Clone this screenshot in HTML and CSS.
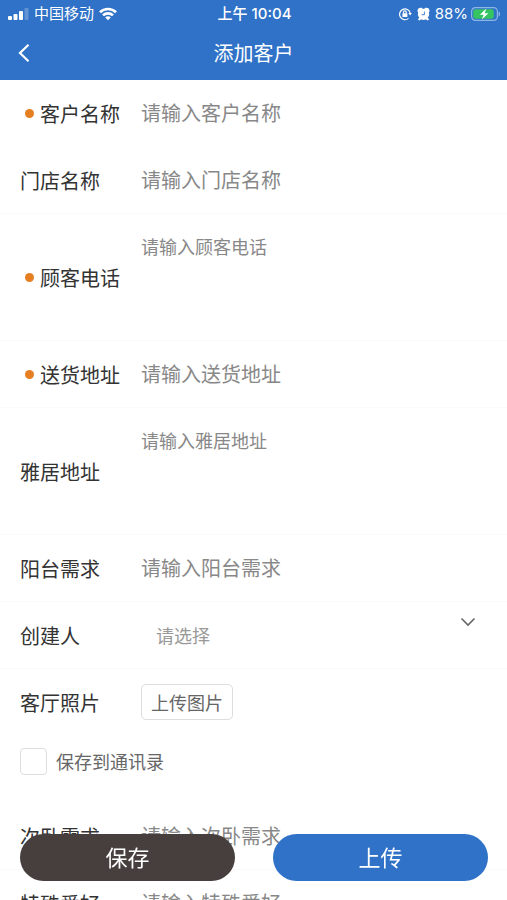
FILE: index.html
```html
<!DOCTYPE html>
<html lang="zh-CN">
<head>
<meta charset="utf-8">
<meta name="viewport" content="width=device-width, initial-scale=1">
<title>添加客户</title>
<link rel="stylesheet" href="styles.css">
</head>
<body>
<header class="header">
  <div class="status">
    <div class="status-side">
      <svg class="signal" width="21" height="12" viewBox="0 0 21 12" fill="#fff" aria-hidden="true">
        <rect x="0" y="8" width="4" height="4" rx="1"/>
        <rect x="5.5" y="6" width="4" height="6" rx="1"/>
        <rect x="11" y="3" width="4" height="9" rx="1"/>
        <rect x="16.5" y="0" width="4" height="12" rx="1" opacity=".25"/>
      </svg>
      <span class="carrier">中国移动</span>
      <svg width="18" height="14" viewBox="0 0 18 14" fill="none" stroke="#fff" stroke-width="2.6" aria-hidden="true">
        <path d="M1 5.2C5.4.9 12.6.9 17 5.2"/>
        <path d="M4 8.4c2.8-2.7 7.2-2.7 10 0"/>
        <path d="M9 13.2 6.2 10.4c1.6-1.4 4-1.4 5.6 0z" fill="#fff" stroke="none"/>
      </svg>
    </div>
    <span class="time">上午 10:04</span>
    <div class="status-side status-right">
      <svg width="14" height="14" viewBox="0 0 14 14" fill="none" stroke="#fff" stroke-width="1.2" aria-hidden="true">
        <path d="M10.5 11.4A5.4 5.4 0 1 1 12.2 6"/>
        <path d="M10.4 6h3.4l-1.7 2.6z" fill="#fff" stroke="none"/>
        <rect x="4.4" y="6.2" width="5" height="3.8" rx=".6" fill="#fff" stroke="none"/>
        <path d="M5.5 6.4V5.2a1.4 1.4 0 0 1 2.8 0v1.2"/>
      </svg>
      <svg class="alarm" width="13" height="14" viewBox="0 0 13 14" fill="#fff" aria-hidden="true">
        <circle cx="6.5" cy="7.3" r="5.6"/>
        <path d="M.6 4.8A3.2 3.2 0 0 1 4.6.8L6 2 2 6zM12.4 4.8A3.2 3.2 0 0 0 8.4.8L7 2l4 4zM2.2 10.2 1 12.8l1.4.7 2-1.5zM10.8 10.2l1.2 2.6-1.4.7-2-1.5z"/>
        <path d="M7.4 4.6v3.1H4.6" fill="none" stroke="#2f72c7" stroke-width=".9"/>
      </svg>
      <span class="percent">88%</span>
      <svg width="30" height="14" viewBox="0 0 30 14" aria-hidden="true">
        <rect x=".6" y=".6" width="25.8" height="12.8" rx="3.8" fill="none" stroke="#8fb5e6" stroke-width="1.2"/>
        <rect x="2.2" y="2.2" width="20.6" height="9.6" rx="2.4" fill="#36c463"/>
        <path d="M27.6 4.6a2.6 2.6 0 0 1 0 4.8z" fill="#8fb5e6"/>
        <path d="M15.4 1.4 8.8 7.8h3.8L10.8 12.6 17.4 6.2h-3.8z" fill="#fff"/>
      </svg>
    </div>
  </div>
  <div class="nav">
    <button class="back" type="button" aria-label="返回">
      <svg width="12" height="20" viewBox="0 0 12 20" fill="none" stroke="#fff" stroke-width="2.2" aria-hidden="true"><path d="M10.5 1.8 2 10l8.5 8.2"/></svg>
    </button>
    <h1 class="title">添加客户</h1>
  </div>
</header>

<form class="form" id="customer">
  <div class="row plain">
    <label class="label required" for="name">客户名称</label>
    <input class="field" id="name" type="text" placeholder="请输入客户名称">
  </div>
  <div class="row">
    <label class="label" for="shop">门店名称</label>
    <input class="field" id="shop" type="text" placeholder="请输入门店名称">
  </div>
  <div class="row">
    <label class="label required" for="phone">顾客电话</label>
    <textarea class="field area" id="phone" placeholder="请输入顾客电话"></textarea>
  </div>
  <div class="row">
    <label class="label required" for="delivery">送货地址</label>
    <input class="field" id="delivery" type="text" placeholder="请输入送货地址">
  </div>
  <div class="row">
    <label class="label" for="home">雅居地址</label>
    <textarea class="field area" id="home" placeholder="请输入雅居地址"></textarea>
  </div>
  <div class="row">
    <label class="label" for="balcony">阳台需求</label>
    <input class="field" id="balcony" type="text" placeholder="请输入阳台需求">
  </div>
  <div class="row">
    <label class="label" for="creator">创建人</label>
    <div class="picker">
      <select class="select" id="creator"><option>请选择</option></select>
      <svg class="chevron" width="16" height="10" viewBox="0 0 16 10" fill="none" stroke="#666" stroke-width="1.6" aria-hidden="true"><path d="M1.5 1.5 8 8l6.5-6.5"/></svg>
    </div>
  </div>
  <div class="row plain">
    <span class="label">客厅照片</span>
    <button class="upload" type="button">上传图片</button>
  </div>
  <div class="check-row">
    <input class="check" id="contacts" type="checkbox">
    <label class="check-label" for="contacts">保存到通讯录</label>
  </div>
  <div class="row">
    <label class="label" for="bedroom">次卧需求</label>
    <input class="field" id="bedroom" type="text" placeholder="请输入次卧需求">
  </div>
  <div class="row">
    <label class="label" for="hobby">特殊爱好</label>
    <input class="field" id="hobby" type="text" placeholder="请输入特殊爱好">
  </div>
</form>

<footer class="actions">
  <button class="action save" type="button">保存</button>
  <button class="action submit" type="submit" form="customer">上传</button>
</footer>
</body>
</html>
```
FILE: styles.css
```css
* {
  box-sizing: border-box;
}

html {
  scrollbar-width: none;
}

body {
  margin: 0;
  background: #fff;
  color: #333;
  font-family: "Noto Sans CJK SC", sans-serif;
  font-size: 20px;
}

button,
input,
select,
textarea {
  font-family: inherit;
}

.header {
  position: sticky;
  top: 0;
  z-index: 2;
  height: 80px;
  background: #2f72c7;
  color: #fff;
}

.status {
  display: grid;
  grid-template-columns: 1fr auto 1fr;
  align-items: center;
  height: 28px;
  padding: 0 6px 0 8px;
  font-family: Inter, "Noto Sans CJK SC", sans-serif;
  font-size: 15px;
  line-height: 28px;
}

.status-side {
  display: flex;
  align-items: center;
  gap: 5px;
}

.status-right {
  justify-content: flex-end;
}

.time {
  font-weight: 500;
}

.percent {
  margin-right: -2px;
}

.nav {
  display: grid;
  grid-template-columns: 48px 1fr 48px;
  align-items: center;
  height: 50px;
}

.back {
  display: flex;
  align-items: center;
  height: 48px;
  padding: 0 18px;
  border: 0;
  background: none;
}

.title {
  margin: 0;
  font-size: 20px;
  font-weight: 400;
  line-height: 48px;
  text-align: center;
}

.form {
  padding-bottom: 80px;
}

.row {
  display: flex;
  align-items: center;
  min-height: 67px;
  padding: 0 20px;
  border-bottom: 1px solid #fafafa;
}

.plain {
  border-bottom-color: transparent;
}

.label {
  display: flex;
  flex: 0 0 121px;
  align-items: center;
  line-height: 29px;
}

.required::before {
  width: 9px;
  height: 9px;
  margin: 0 6px 0 5px;
  border-radius: 50%;
  background: #e67e22;
  content: "";
}

.field {
  flex: 1;
  min-width: 0;
  height: 40px;
  padding: 0 0 2px;
  border: 0;
  outline: 0;
  background: none;
  color: #333;
  font-size: 20px;
}

.area {
  height: 126px;
  padding: 19px 0;
  font-size: 18px;
  line-height: 26px;
  resize: none;
}

.field::placeholder {
  color: #888;
  opacity: 1;
}

.picker {
  position: relative;
  flex: 1;
}

.select {
  width: 100%;
  height: 40px;
  padding: 0 48px 0 15px;
  border: 0;
  appearance: none;
  background: none;
  color: #999;
  font-size: 18px;
}

.chevron {
  position: absolute;
  top: 2px;
  right: 11px;
  pointer-events: none;
}

.upload {
  height: 36px;
  padding: 0 9px;
  border: 1px solid #ddd;
  border-radius: 5px;
  background: #fff;
  color: #666;
  font-size: 18px;
  line-height: 32px;
}

.check-row {
  display: flex;
  align-items: flex-start;
  gap: 9px;
  height: 67px;
  padding: 12px 20px;
}

.check {
  width: 27px;
  height: 27px;
  margin: 0;
  border: 1px solid #ddd;
  border-radius: 4px;
  appearance: none;
  background: #fff;
}

.check:checked {
  background: #2f72c7;
}

.check-label {
  color: #666;
  font-size: 18px;
  line-height: 26px;
}

.actions {
  position: fixed;
  right: 0;
  bottom: 0;
  left: 0;
  display: flex;
  gap: 38px;
  padding: 0 19px 19px 20px;
}

.action {
  flex: 1;
  height: 47px;
  padding: 0 0 4px;
  border: 0;
  border-radius: 24px;
  color: #fff;
  font-size: 22px;
}

.save {
  background: #463f3e;
}

.submit {
  background: #2f72c7;
}
```
